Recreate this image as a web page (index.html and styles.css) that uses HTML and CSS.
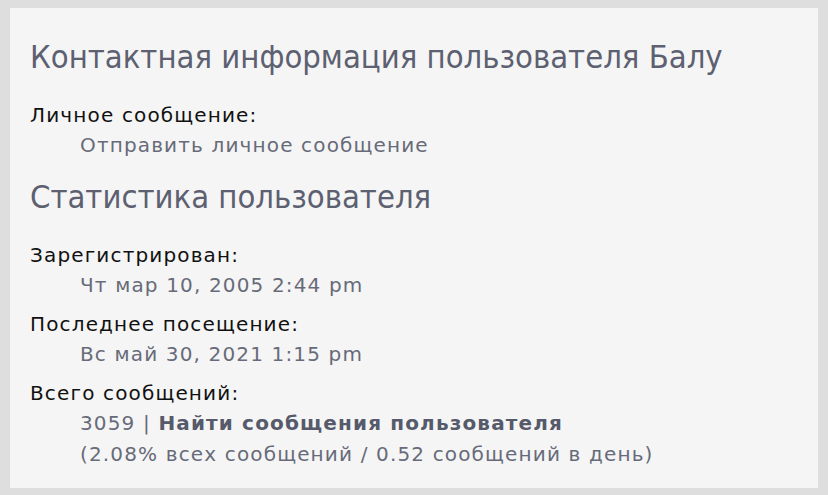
FILE: index.html
```html
<!DOCTYPE html>
<html lang="ru">
<head>
<meta charset="utf-8">
<link rel="stylesheet" href="styles.css">
</head>
<body>
<div class="panel">
  <h2 class="title">Контактная информация пользователя Балу</h2>
  <dl class="info">
    <dt>Личное сообщение:</dt>
    <dd><a href="#">Отправить личное сообщение</a></dd>
  </dl>
  <h2 class="title">Статистика пользователя</h2>
  <dl class="info">
    <dt>Зарегистрирован:</dt>
    <dd>Чт мар 10, 2005 2:44 pm</dd>
    <dt>Последнее посещение:</dt>
    <dd>Вс май 30, 2021 1:15 pm</dd>
    <dt>Всего сообщений:</dt>
    <dd>3059 | <a href="#" class="strong">Найти сообщения пользователя</a><br>(2.08% всех сообщений / 0.52 сообщений в день)</dd>
  </dl>
</div>
</body>
</html>
```
FILE: styles.css
```css
html, body {
  margin: 0;
  padding: 0;
}
body {
  background: #dedede;
  padding: 8px 10px 7px 10px;
  font-family: "DejaVu Sans", Verdana, sans-serif;
  height: 495px;
  box-sizing: border-box;
}
.panel {
  background: #f5f5f5;
  height: 100%;
  box-sizing: border-box;
  padding: 29px 20px 0 20px;
}
.title {
  margin: 0;
  font-family: "DejaVu Sans Condensed", "DejaVu Sans", sans-serif;
  font-stretch: condensed;
  font-weight: normal;
  font-size: 32.5px;
  line-height: 40px;
  color: #5c6070;
}
.info {
  margin: 23px 0 16px 0;
  font-size: 20px;
  line-height: 31px;
  letter-spacing: 1.15px;
}
.info dt {
  color: #111;
  margin-top: 8px;
}
.info dt:first-child {
  margin-top: 0;
}
.info dd {
  margin: -1px 0 0 50px;
  color: #676b79;
}
.info a {
  color: #676b79;
  text-decoration: none;
}
.info a.strong {
  font-weight: bold;
  color: #565a6a;
}
```
